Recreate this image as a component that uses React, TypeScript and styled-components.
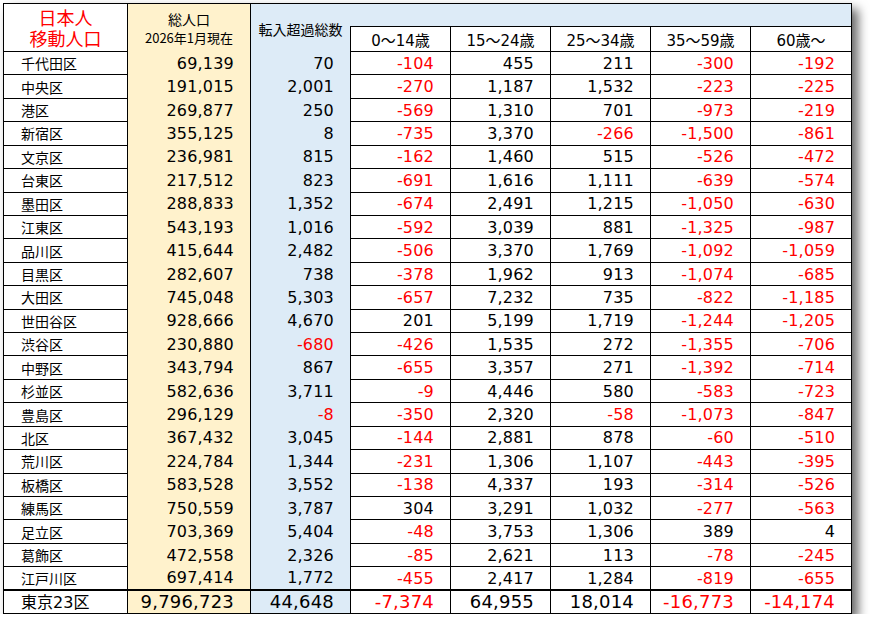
import * as React from 'react'
import styled, {createGlobalStyle} from 'styled-components'

const GlobalStyle = createGlobalStyle`
  html, body {
    margin: 0;
    padding: 0;
    background: #fff;
  }
  body {
    font-family: "DejaVu Sans", "Noto Sans CJK JP", sans-serif;
    color: #000;
  }
`

const YELLOW = '#fff2cc'
const BLUE = '#ddebf7'

const Page = styled.div`
  padding: 3px 0 0 3px;
`

const Table = styled.table`
  border-collapse: collapse;
  table-layout: fixed;
  width: 848px;
  border: 1px solid #000;
  box-shadow: 6px 6px 10px rgba(0, 0, 0, 0.6);
  background: #fff;
`

const Col = styled.col<{$w: number}>`
  width: ${p => p.$w}px;
`

const Corner = styled.th`
  border: 1px solid #000;
  color: #ff0000;
  font-family: "Noto Sans CJK JP", sans-serif;
  font-size: 18px;
  font-weight: normal;
  line-height: 21px;
  text-align: center;
  vertical-align: middle;
  padding: 0;
`

const PopHead = styled.th`
  background: ${YELLOW};
  border-left: 1px solid #000;
  border-right: 1px solid #000;
  font-family: "Noto Sans CJK JP", sans-serif;
  font-weight: normal;
  text-align: center;
  padding: 1px 0 0;
`

const PopTitle = styled.span`
  display: block;
  font-size: 14px;
  line-height: 19px;
`

const PopDate = styled.span`
  display: block;
  font-size: 13px;
  line-height: 17px;
`

const NetHead = styled.th`
  background: ${BLUE};
  border-left: 1px solid #000;
  font-family: "Noto Sans CJK JP", sans-serif;
  font-size: 14px;
  font-weight: normal;
  text-align: center;
  padding: 2px 0 0;
`

const BandHead = styled.th`
  background: ${BLUE};
  border-bottom: 1px solid #000;
  height: 22px;
  padding: 0;
`

const AgeHead = styled.th`
  border: 1px solid #000;
  font-size: 15px;
  font-weight: normal;
  text-align: center;
  height: 23px;
  padding: 1px 0 0;
`

const Row = styled.tr<{$total?: boolean}>`
  height: ${p => (p.$total ? '23px' : '23.43px')};
  td {
    border-top: ${p => (p.$total ? '2px solid #000' : undefined)};
  }
`

const Name = styled.td<{$total?: boolean}>`
  border: 1px solid #000;
  padding: 0 0 0 17px;
  font-family: "Noto Sans CJK JP", sans-serif;
  font-size: ${p => (p.$total ? '16px' : '14px')};
  line-height: 1;
  white-space: nowrap;
`

const Digits = styled.span`
  font-family: "DejaVu Sans", sans-serif;
`

const Num = styled.td<{$bg?: string; $neg?: boolean; $total?: boolean; $open?: boolean}>`
  background: ${p => p.$bg || '#fff'};
  border-left: 1px solid #000;
  border-right: 1px solid #000;
  border-bottom: ${p => (p.$open ? 'none' : '1px solid #000')};
  color: ${p => (p.$neg ? '#ff0000' : '#000')};
  font-size: ${p => (p.$total ? '18px' : '16px')};
  letter-spacing: 0.2px;
  line-height: 1;
  text-align: right;
  padding: 1px 16px 0 0;
  white-space: nowrap;
`

const widths = [124, 123, 100, 100, 100, 100, 100, 101]

const ages = ['0～14歳', '15～24歳', '25～34歳', '35～59歳', '60歳～']

const rows: string[][] = [
  ['千代田区', '69,139', '70', '-104', '455', '211', '-300', '-192'],
  ['中央区', '191,015', '2,001', '-270', '1,187', '1,532', '-223', '-225'],
  ['港区', '269,877', '250', '-569', '1,310', '701', '-973', '-219'],
  ['新宿区', '355,125', '8', '-735', '3,370', '-266', '-1,500', '-861'],
  ['文京区', '236,981', '815', '-162', '1,460', '515', '-526', '-472'],
  ['台東区', '217,512', '823', '-691', '1,616', '1,111', '-639', '-574'],
  ['墨田区', '288,833', '1,352', '-674', '2,491', '1,215', '-1,050', '-630'],
  ['江東区', '543,193', '1,016', '-592', '3,039', '881', '-1,325', '-987'],
  ['品川区', '415,644', '2,482', '-506', '3,370', '1,769', '-1,092', '-1,059'],
  ['目黒区', '282,607', '738', '-378', '1,962', '913', '-1,074', '-685'],
  ['大田区', '745,048', '5,303', '-657', '7,232', '735', '-822', '-1,185'],
  ['世田谷区', '928,666', '4,670', '201', '5,199', '1,719', '-1,244', '-1,205'],
  ['渋谷区', '230,880', '-680', '-426', '1,535', '272', '-1,355', '-706'],
  ['中野区', '343,794', '867', '-655', '3,357', '271', '-1,392', '-714'],
  ['杉並区', '582,636', '3,711', '-9', '4,446', '580', '-583', '-723'],
  ['豊島区', '296,129', '-8', '-350', '2,320', '-58', '-1,073', '-847'],
  ['北区', '367,432', '3,045', '-144', '2,881', '878', '-60', '-510'],
  ['荒川区', '224,784', '1,344', '-231', '1,306', '1,107', '-443', '-395'],
  ['板橋区', '583,528', '3,552', '-138', '4,337', '193', '-314', '-526'],
  ['練馬区', '750,559', '3,787', '304', '3,291', '1,032', '-277', '-563'],
  ['足立区', '703,369', '5,404', '-48', '3,753', '1,306', '389', '4'],
  ['葛飾区', '472,558', '2,326', '-85', '2,621', '113', '-78', '-245'],
  ['江戸川区', '697,414', '1,772', '-455', '2,417', '1,284', '-819', '-655'],
]

const total = ['東京', '9,796,723', '44,648', '-7,374', '64,955', '18,014', '-16,773', '-14,174']

const isNeg = (v: string) => v.startsWith('-')

const DataRow = ({cells, isTotal}: {cells: string[]; isTotal?: boolean}) => {
  const [name, pop, net, ...byAge] = cells
  return (
    <Row $total={isTotal}>
      <Name $total={isTotal}>
        {name}
        {isTotal && (
          <>
            <Digits>23</Digits>区
          </>
        )}
      </Name>
      <Num $bg={YELLOW} $open={!isTotal} $total={isTotal}>{pop}</Num>
      <Num $bg={BLUE} $open={!isTotal} $neg={isNeg(net)} $total={isTotal}>{net}</Num>
      {byAge.map((v, i) => (
        <Num key={i} $neg={isNeg(v)} $total={isTotal}>{v}</Num>
      ))}
    </Row>
  )
}

const App = () => (
  <Page>
    <GlobalStyle />
    <Table>
      <colgroup>
        {widths.map((w, i) => (
          <Col key={i} $w={w} />
        ))}
      </colgroup>
      <thead>
        <tr>
          <Corner rowSpan={2}>
            日本人
            <br />
            移動人口
          </Corner>
          <PopHead rowSpan={2}>
            <PopTitle>総人口</PopTitle>
            <PopDate>2026年1月現在</PopDate>
          </PopHead>
          <NetHead rowSpan={2}>転入超過総数</NetHead>
          <BandHead colSpan={5} />
        </tr>
        <tr>
          {ages.map(a => (
            <AgeHead key={a}>{a}</AgeHead>
          ))}
        </tr>
      </thead>
      <tbody>
        {rows.map(r => (
          <DataRow key={r[0]} cells={r} />
        ))}
        <DataRow cells={total} isTotal={true} />
      </tbody>
    </Table>
  </Page>
)

export default App
